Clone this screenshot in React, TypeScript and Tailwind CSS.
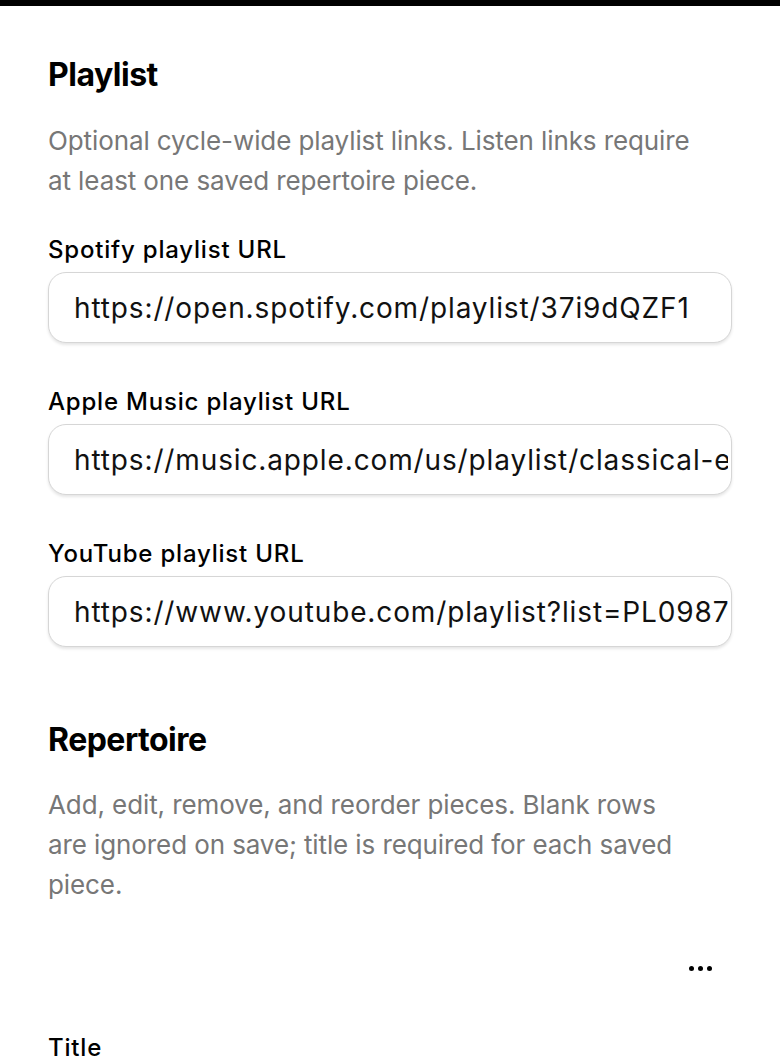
import React from "react";

const font = { fontFamily: "Inter, 'Noto Sans', sans-serif" };

function Field({ label, value }: { label: string; value: string }) {
  return (
    <div className="flex flex-col">
      <label className="text-[24px] leading-[32px] font-medium tracking-[0.8px] text-black">{label}</label>
      <div className="mt-[6px] h-[71px] rounded-[18px] border border-[#d6d6d6] bg-white shadow-[0_2px_3px_rgba(0,0,0,0.10)] flex items-center pl-[25px] pr-[3px]">
        <div className="flex-1 min-w-0 overflow-hidden">
          <span className="text-[28px] tracking-[0.87px] text-[#111] whitespace-nowrap">{value}</span>
        </div>
      </div>
    </div>
  );
}

export default function App() {
  return (
    <div className="min-h-[1056px] bg-white" style={font}>
      <div className="h-[6px] bg-black" />
      <div className="px-[48px] pt-[49px]">
        <h2 className="text-[32px] leading-[40px] font-bold tracking-[-0.5px] text-black">Playlist</h2>
        <p className="mt-[26px] max-w-[648px] text-[26px] leading-[40px] tracking-[-0.1px] text-[#777777]">
          Optional cycle-wide playlist links. Listen links require at least one saved repertoire piece.
        </p>
        <div className="mt-[33px] flex flex-col gap-[43px]">
          <Field label="Spotify playlist URL" value="https://open.spotify.com/playlist/37i9dQZF1" />
          <Field label="Apple Music playlist URL" value="https://music.apple.com/us/playlist/classical-essentials" />
          <Field label="YouTube playlist URL" value="https://www.youtube.com/playlist?list=PL098765" />
        </div>
        <h2 className="mt-[73px] text-[32px] leading-[40px] font-bold tracking-[-0.5px] text-black">Repertoire</h2>
        <p className="mt-[25px] max-w-[648px] text-[26px] leading-[40px] tracking-[-0.1px] text-[#777777]">
          Add, edit, remove, and reorder pieces. Blank rows are ignored on save; title is required for each saved piece.
        </p>
        <div className="mt-[51px] flex justify-end pr-[20px]">
          <div className="h-[24px] flex items-center gap-[4px]">
            <span className="block w-[5px] h-[5px] rounded-full bg-black" />
            <span className="block w-[5px] h-[5px] rounded-full bg-black" />
            <span className="block w-[5px] h-[5px] rounded-full bg-black" />
          </div>
        </div>
        <div className="mt-[52px] text-[24px] leading-[32px] font-medium tracking-[0.8px] text-black">Title</div>
      </div>
    </div>
  );
}
